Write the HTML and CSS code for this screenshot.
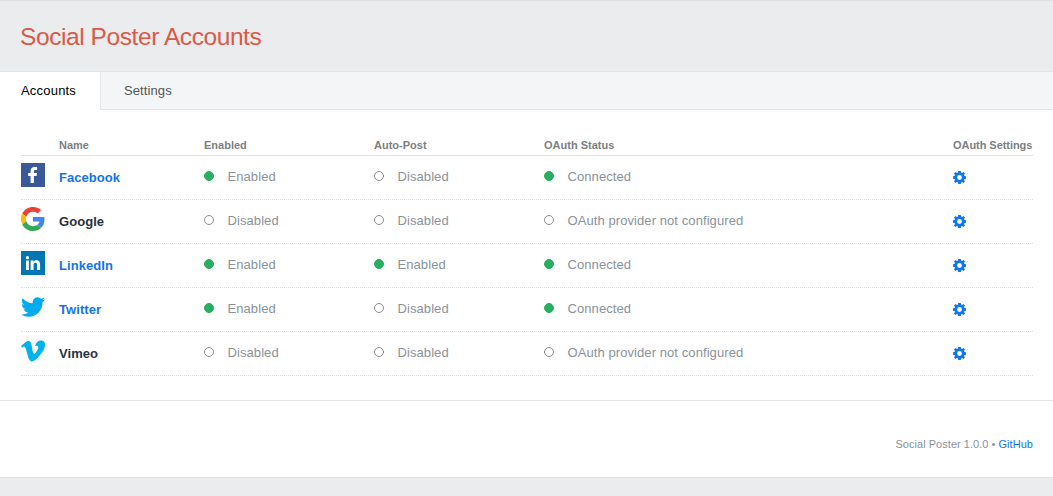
FILE: index.html
```html
<!DOCTYPE html>
<html lang="en">
<head>
<meta charset="utf-8">
<title>Social Poster Accounts</title>
<link rel="stylesheet" href="styles.css">
</head>
<body>
<svg class="sprite" width="0" height="0">
  <symbol id="gear" viewBox="0 0 13 13"><path fill-rule="evenodd" d="M5.200 0h2.600l.3 1.550 1 .42 1.400-.95 1.500 1.500-.95 1.400.42 1L13 5.200v2.600l-1.550.3-.42 1 .95 1.400-1.500 1.500-1.400-.95-1 .42L7.800 13H5.200l-.3-1.550-1-.42-1.400.95-1.500-1.500.95-1.400-.42-1L0 7.800V5.200l1.550-.3.42-1-.95-1.400 1.500-1.500 1.400.95 1-.42zM6.500 4.100a2.400 2.400 0 1 0 0 4.800 2.400 2.400 0 0 0 0-4.800z"/></symbol>
</svg>
<header class="header"><h1 class="title">Social Poster Accounts</h1></header>
<nav class="tabs">
  <a class="tab active">Accounts</a>
  <a class="tab">Settings</a>
</nav>
<main class="content">
  <div class="row head">
    <span></span><span>Name</span><span>Enabled</span><span>Auto-Post</span><span>OAuth Status</span><span class="h-settings">OAuth Settings</span>
  </div>
  <div class="row">
    <svg class="logo" viewBox="0 0 24 24"><path fill="#3b5998" d="M0 0h24v24H0z"/><path fill="#fff" d="M9.600 20v-6.900H7.200V9.900h2.400V7.900c0-2.600 1.600-4 4-4 1.200 0 2.200.1 2.500.1v2.900h-1.700c-1.300 0-1.500.6-1.500 1.400v1.600H16l-.4 3.200h-2.700V20z"/></svg>
    <span class="name link">Facebook</span>
    <span class="state"><i class="dot on"></i>Enabled</span>
    <span class="state"><i class="dot"></i>Disabled</span>
    <span class="state"><i class="dot on"></i>Connected</span>
    <svg class="gear"><use href="#gear"/></svg>
  </div>
  <div class="row">
    <svg class="logo" viewBox="0 0 48 48"><path fill="#ea4335" d="M24 9.500c3.540 0 6.710 1.220 9.210 3.600l6.850-6.850C35.900 2.380 30.470 0 24 0 14.620 0 6.510 5.380 2.560 13.220l7.980 6.190C12.430 13.720 17.740 9.500 24 9.500z"/><path fill="#4285f4" d="M46.980 24.550c0-1.570-.15-3.090-.38-4.550H24v9.020h12.940c-.58 2.960-2.260 5.480-4.780 7.180l7.730 6c4.510-4.180 7.090-10.360 7.090-17.650z"/><path fill="#fbbc05" d="M10.530 28.590c-.48-1.450-.76-2.990-.76-4.590s.27-3.140.76-4.590l-7.980-6.190C.92 16.460 0 20.120 0 24s.92 7.540 2.560 10.780z"/><path fill="#34a853" d="M24 48c6.480 0 11.930-2.130 15.890-5.810l-7.730-6c-2.150 1.450-4.920 2.300-8.160 2.300-6.260 0-11.570-4.220-13.470-9.910l-7.980 6.190C6.510 42.620 14.620 48 24 48z"/></svg>
    <span class="name">Google</span>
    <span class="state"><i class="dot"></i>Disabled</span>
    <span class="state"><i class="dot"></i>Disabled</span>
    <span class="state"><i class="dot"></i>OAuth provider not configured</span>
    <svg class="gear"><use href="#gear"/></svg>
  </div>
  <div class="row">
    <svg class="logo" viewBox="0 0 24 24"><path fill="#0077b5" d="M0 0h24v24H0z"/><path fill="#fff" d="M5 9.400h2.900V19H5zM6.450 5a1.650 1.650 0 1 1 0 3.300 1.650 1.650 0 0 1 0-3.300zM9.600 9.400h2.800v1.300c.5-.9 1.500-1.500 2.900-1.500 3 0 3.800 1.900 3.800 4.500V19H16v-4.700c0-1.300-.1-2.500-1.600-2.500s-1.800 1.200-1.800 2.500V19h-3z"/></svg>
    <span class="name link">LinkedIn</span>
    <span class="state"><i class="dot on"></i>Enabled</span>
    <span class="state"><i class="dot on"></i>Enabled</span>
    <span class="state"><i class="dot on"></i>Connected</span>
    <svg class="gear"><use href="#gear"/></svg>
  </div>
  <div class="row">
    <svg class="logo" viewBox="0 0 24 24"><path fill="#00aced" d="M23.950 4.570a10 10 0 0 1-2.820.770 4.960 4.960 0 0 0 2.160-2.720c-.95.550-2 .950-3.120 1.180a4.920 4.920 0 0 0-8.380 4.480C7.690 8.090 4.070 6.130 1.640 3.160a4.920 4.920 0 0 0 1.520 6.570 4.900 4.900 0 0 1-2.230-.610v.060a4.920 4.920 0 0 0 3.950 4.830 5 5 0 0 1-2.210.080 4.940 4.940 0 0 0 4.600 3.420A9.870 9.870 0 0 1 0 19.540a13.990 13.990 0 0 0 7.550 2.210c9.050 0 14-7.500 14-13.980 0-.210 0-.420-.020-.630a9.940 9.940 0 0 0 2.420-2.570z"/></svg>
    <span class="name link">Twitter</span>
    <span class="state"><i class="dot on"></i>Enabled</span>
    <span class="state"><i class="dot"></i>Disabled</span>
    <span class="state"><i class="dot on"></i>Connected</span>
    <svg class="gear"><use href="#gear"/></svg>
  </div>
  <div class="row">
    <svg class="logo" viewBox="0 0 24 24"><path fill="#00b3ec" d="M23.980 6.420c-.110 2.340-1.740 5.540-4.890 9.600-3.260 4.250-6.020 6.370-8.290 6.370-1.400 0-2.580-1.290-3.550-3.880L5.320 11.400C4.600 8.820 3.830 7.530 3.010 7.530c-.180 0-.810.380-1.880 1.130L0 7.210a315 315 0 0 0 3.500-3.130C5.080 2.700 6.270 1.990 7.060 1.910c1.870-.180 3.020 1.100 3.450 3.830.470 2.950.790 4.790.970 5.510.540 2.450 1.130 3.670 1.780 3.670.500 0 1.260-.800 2.270-2.390 1.010-1.590 1.550-2.800 1.620-3.630.140-1.370-.400-2.060-1.620-2.060-.570 0-1.170.130-1.770.390 1.180-3.870 3.430-5.750 6.760-5.640 2.470.070 3.630 1.670 3.480 4.810z"/></svg>
    <span class="name">Vimeo</span>
    <span class="state"><i class="dot"></i>Disabled</span>
    <span class="state"><i class="dot"></i>Disabled</span>
    <span class="state"><i class="dot"></i>OAuth provider not configured</span>
    <svg class="gear"><use href="#gear"/></svg>
  </div>
</main>
<footer class="footer"><span>Social Poster 1.0.0 •</span><a class="foot-link">GitHub</a></footer>
</body>
</html>
```
FILE: styles.css
```css
* { box-sizing: border-box; }
body {
  margin: 0;
  height: 496px;
  overflow: hidden;
  background: #ebecee;
  font: 13px/16px "Liberation Sans", Arial, sans-serif;
  color: #8a929c;
}
.sprite { display: block; height: 0; }
.header {
  height: 71px;
  padding: 23px 20px 0 20px;
  border-top: 1px solid #dcdee0;
}
.title {
  margin: 0;
  font-size: 24.5px;
  line-height: 26px;
  font-weight: 300;
  letter-spacing: -0.42px;
  color: #da5a47;
}
.tabs {
  display: flex;
  height: 39px;
  background: #f4f5f6;
  box-shadow: inset 0 1px #e3e5e8, inset 0 -1px #e3e5e8;
}
.tab { padding: 12px 24px 0 23px; letter-spacing: 0.1px; color: #555; }
.tab.active {
  width: 101px;
  padding-left: 21px;
  margin-top: 1px;
  padding-top: 11px;
  background: #fff;
  border-right: 1px solid #e3e5e8;
  letter-spacing: 0.2px;
  color: #000;
}
.content {
  height: 291px;
  padding: 24px 20px 0 21px;
  background: #fff;
  border-bottom: 1px solid #e3e5e8;
}
.row {
  display: grid;
  grid-template-columns: 38px 145px 170px 170px 409px 80px;
  height: 44px;
  padding-top: 7px;
  align-items: start;
  border-bottom: 1px dotted #dcdfe2;
  white-space: nowrap;
}
.head {
  height: 22px;
  padding-top: 3px;
  border-bottom: 1px solid #e0e1e2;
  font-size: 11px;
  font-weight: bold;
  color: #7d7f82;
}
.h-settings { letter-spacing: -0.05px; }
.logo { width: 24px; height: 24px; }
.name { padding-top: 7px; font-weight: bold; letter-spacing: 0.06px; color: #29323d; }
.link { color: #1373f0; }
.state { display: flex; gap: 13.5px; padding-top: 6px; letter-spacing: 0.08px; }
.dot {
  width: 10px;
  height: 10px;
  margin-top: 2px;
  border: 1px solid #8b8d90;
  border-radius: 50%;
}
.dot.on { background: #27ae60; border-color: #27ae60; }
.gear { width: 13px; height: 13px; margin-top: 8px; fill: #0d78f2; }
.footer {
  display: flex;
  justify-content: flex-end;
  gap: 3px;
  height: 77px;
  padding: 35px 20px 0;
  background: #fff;
  border-bottom: 1px solid #e0e2e4;
  font-size: 11px;
  letter-spacing: 0.04px;
}
.foot-link { color: #1373f0; }
```
